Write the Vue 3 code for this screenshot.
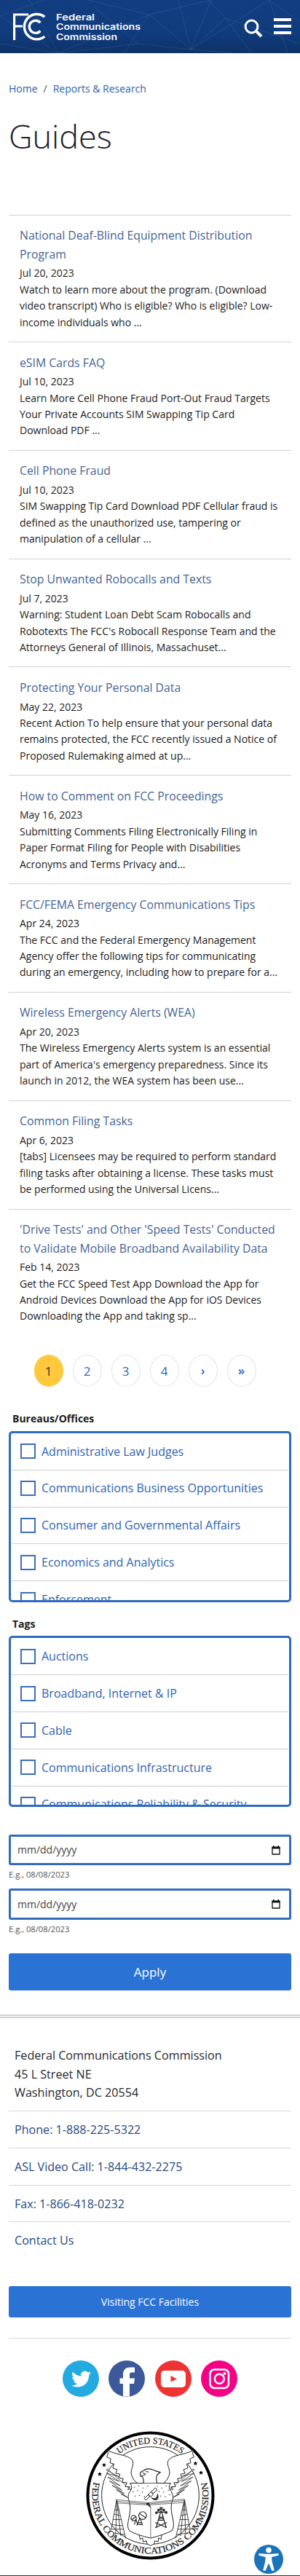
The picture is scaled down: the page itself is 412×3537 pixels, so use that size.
<script setup>
const guides = [
  ['National Deaf-Blind Equipment Distribution Program', 'Jul 20, 2023', 'Watch to learn more about the program. (Download video transcript) Who is eligible? Who is eligible? Low-income individuals who ...'],
  ['eSIM Cards FAQ', 'Jul 10, 2023', 'Learn More Cell Phone Fraud Port-Out Fraud Targets Your Private Accounts SIM Swapping Tip Card Download PDF ...'],
  ['Cell Phone Fraud', 'Jul 10, 2023', 'SIM Swapping Tip Card Download PDF Cellular fraud is defined as the unauthorized use, tampering or manipulation of a cellular ...'],
  ['Stop Unwanted Robocalls and Texts', 'Jul 7, 2023', "Warning: Student Loan Debt Scam Robocalls and Robotexts The FCC's Robocall Response Team and the Attorneys General of Illinois, Massachuset..."],
  ['Protecting Your Personal Data', 'May 22, 2023', 'Recent Action To help ensure that your personal data remains protected, the FCC recently issued a Notice of Proposed Rulemaking aimed at up...'],
  ['How to Comment on FCC Proceedings', 'May 16, 2023', 'Submitting Comments Filing Electronically Filing in Paper Format Filing for People with Disabilities Acronyms and Terms Privacy and...'],
  ['FCC/FEMA Emergency Communications Tips', 'Apr 24, 2023', 'The FCC and the Federal Emergency Management Agency offer the following tips for communicating during an emergency, including how to prepare for a...'],
  ['Wireless Emergency Alerts (WEA)', 'Apr 20, 2023', "The Wireless Emergency Alerts system is an essential part of America's emergency preparedness. Since its launch in 2012, the WEA system has been use..."],
  ['Common Filing Tasks', 'Apr 6, 2023', '[tabs] Licensees may be required to perform standard filing tasks after obtaining a license. These tasks must be performed using the Universal Licens...'],
  ["'Drive Tests' and Other 'Speed Tests' Conducted to Validate Mobile Broadband Availability Data", 'Feb 14, 2023', 'Get the FCC Speed Test App Download the App for Android Devices Download the App for iOS Devices Downloading the App and taking sp...'],
]
const pages = ['1', '2', '3', '4', '›', '»']
const filters = [
  { label: 'Bureaus/Offices', options: ['Administrative Law Judges', 'Communications Business Opportunities', 'Consumer and Governmental Affairs', 'Economics and Analytics', 'Enforcement'] },
  { label: 'Tags', options: ['Auctions', 'Broadband, Internet & IP', 'Cable', 'Communications Infrastructure', 'Communications Reliability & Security'] },
]
const contacts = ['Phone: 1-888-225-5322', 'ASL Video Call: 1-844-432-2275', 'Fax: 1-866-418-0232', 'Contact Us']
const stars = [[125, 197], [107, 234], [502, 190], [525, 228]]
const dots = [[250, 290], [268, 284], [287, 292], [305, 284], [245, 308], [264, 303], [283, 309], [253, 325], [272, 323], [291, 327], [345, 285], [363, 292], [382, 284], [352, 306], [371, 309], [390, 302], [358, 325], [378, 328], [395, 320]]
</script>

<template>
  <div class="page">
    <header class="top">
      <svg class="web" viewBox="0 0 412 73" preserveAspectRatio="none">
        <path d="M0 22L60 0M0 22L80 73L205 20L290 0L262 68L370 0L412 30M120 0L205 20L262 68L245 0M205 20L170 73M262 68L310 25L285 0M310 25L345 73M310 25L412 60M320 73L262 68L190 60L80 73L40 0M130 10L190 60M370 0L395 73M0 60L80 73" />
      </svg>
      <svg class="logo" viewBox="0 0 200 73">
        <g fill="none" stroke="#fff">
          <path d="M19.6 55V20H39M19.6 36H31" stroke-width="3.2" />
          <path d="M61.3 23.2A17.2 17.2 0 1 0 61.3 50.2" stroke-width="3.4" />
          <path d="M55.3 31.1A8.6 8.6 0 1 0 55.3 42.5" stroke-width="3.4" />
        </g>
        <g class="brand">
          <text x="77" y="27.5" textLength="53" lengthAdjust="spacingAndGlyphs">Federal</text>
          <text x="77" y="41" textLength="116" lengthAdjust="spacingAndGlyphs">Communications</text>
          <text x="77" y="54.5" textLength="84" lengthAdjust="spacingAndGlyphs">Commission</text>
        </g>
      </svg>
      <div class="tools">
        <svg width="26" height="26" viewBox="0 0 26 26"><circle cx="10.5" cy="10.5" r="8.4" fill="none" stroke="#fff" stroke-width="3" /><path d="M16.4 16.4L24 24" stroke="#fff" stroke-width="4" /></svg>
        <span class="burger"><i /><i /><i /></span>
      </div>
    </header>

    <main>
      <nav class="crumbs"><a>Home</a><span>/</span><a>Reports &amp; Research</a></nav>
      <h1>Guides</h1>
      <section class="guides">
        <article v-for="g in guides" :key="g[0]">
          <h2>{{ g[0] }}</h2>
          <p>{{ g[1] }}</p>
          <p>{{ g[2] }}</p>
        </article>
      </section>
      <nav class="pager">
        <a v-for="(p, i) in pages" :key="p" :class="{ current: i === 0, small: i > 3 }">{{ p }}</a>
      </nav>
      <section v-for="f in filters" :key="f.label" class="filter">
        <h3>{{ f.label }}</h3>
        <div class="options">
          <label v-for="o in f.options" :key="o"><span class="box" />{{ o }}</label>
        </div>
      </section>
      <section class="dates">
        <div v-for="n in 2" :key="n" class="date">
          <div class="field">
            <span>mm/dd/yyyy</span>
            <svg width="12" height="13" viewBox="0 0 12 13"><path d="M1 3H11V12H1Z" fill="none" stroke="#111" stroke-width="1.3" /><path d="M.4 1.6H11.6V4.4H.4ZM2 0H3.6V2H2ZM8.4 0H10V2H8.4Z" fill="#111" /></svg>
          </div>
          <small>E.g., 08/08/2023</small>
        </div>
      </section>
      <button class="apply">Apply</button>
    </main>

    <footer>
      <address>Federal Communications Commission<br />45 L Street NE<br />Washington, DC 20554</address>
      <a v-for="c in contacts" :key="c" class="contact">{{ c }}</a>
      <button class="visit">Visiting FCC Facilities</button>
      <div class="social">
        <svg viewBox="0 0 50 50"><circle cx="25" cy="25" r="25" fill="#24aae1" /><path fill="#fff" d="M39 17.2c-1 .5-2 .8-3.1.9 1.100-.7 2-1.700 2.400-2.900-1 .6-2.200 1.100-3.500 1.300a5.500 5.500 0 0 0-9.500 5c-4.600-.2-8.600-2.400-11.300-5.700-1.500 2.500-.8 5.700 1.700 7.300-.9 0-1.700-.3-2.500-.7 0 2.600 1.900 5 4.400 5.500-.8.2-1.600.3-2.500.1.700 2.200 2.700 3.700 5.200 3.800A11 11 0 0 1 12 34.300c8.500 5.300 24.300 1.500 24.200-14.200 1.100-.8 2.100-1.800 2.800-2.900z" /></svg>
        <svg viewBox="0 0 50 50"><circle cx="25" cy="25" r="25" fill="#3c5a9a" /><path fill="#fff" d="M20 49.500V32h-4.500v-7.500H20v-5c0-7 4-10 9.500-10H36v7h-4c-2.500 0-3 1.300-3 3.300v4.700h7L35 32h-6v17.500Z" /></svg>
        <svg viewBox="0 0 50 50"><circle cx="25" cy="25" r="25" fill="#ee3432" /><rect x="8" y="14" width="34" height="23" rx="5" fill="#fff" /><path d="M21.500 21L30 25.500L21.500 29.500Z" fill="#ee3432" /></svg>
        <svg viewBox="0 0 50 50"><circle cx="25" cy="25" r="25" fill="#f40185" /><g fill="none" stroke="#fff" stroke-width="2.500"><rect x="12.500" y="12.500" width="25.500" height="25.500" rx="6" /><circle cx="25.300" cy="25.300" r="6.500" /></g><circle cx="32.500" cy="18" r="1.900" fill="#fff" /></svg>
      </div>
      <svg class="seal" viewBox="50 57 532 532">
        <defs>
          <path id="sealTop" d="M102 323A214 214 0 0 1 530 323" />
          <path id="sealBottom" d="M90.500 240.900A240 240 0 1 0 541.500 240.900" />
        </defs>
        <circle cx="316" cy="323" r="258.500" fill="#fff" stroke="#000" stroke-width="12" />
        <circle cx="316" cy="323" r="201" fill="none" stroke="#222" stroke-width="3" />
        <!-- wings -->
        <g fill="#fff" stroke="#222" stroke-width="3" stroke-linejoin="round">
          <path d="M134 217l52 28-50-14 52 34-48-18 52 36-45-20 52 38-41-20 50 34-33-16 44 30-23-12 37 20 8-34-80-68-20-22z" stroke-width="2.200" />
          <path d="M138 135C165 155 240 155 244 184C248 205 228 220 241 246Q247 262 261 271Q250 298 222 298l10-10-20-2 7-16-20-2 5-15-19-3 6-15-18-4 6-15-18-6 5-17-17-5 4-16-17-8 6-16z" />
        </g>
        <g transform="matrix(-1 0 0 1 632 0)" fill="#fff" stroke="#222" stroke-width="3" stroke-linejoin="round">
          <path d="M134 217l52 28-50-14 52 34-48-18 52 36-45-20 52 38-41-20 50 34-33-16 44 30-23-12 37 20 8-34-80-68-20-22z" stroke-width="2.200" />
          <path d="M138 135C165 155 240 155 244 184C248 205 228 220 241 246Q247 262 261 271Q250 298 222 298l10-10-20-2 7-16-20-2 5-15-19-3 6-15-18-4 6-15-18-6 5-17-17-5 4-16-17-8 6-16z" />
        </g>
        <!-- radio towers -->
        <g fill="none" stroke="#222" stroke-width="2.500">
          <path d="M177 340L154 464M177 340L214 500M177 340L173 478M177 340L194 490M170 382H187M166 400L191 406M162 422H196M158 443L201 448M155 462H206M163 478L211 484" />
          <path transform="matrix(-1 0 0 1 634 0)" d="M177 340L154 464M177 340L214 500M177 340L173 478M177 340L194 490M170 382H187M166 400L191 406M162 422H196M158 443L201 448M155 462H206M163 478L211 484" />
        </g>
        <g fill="#fff" stroke="#222" stroke-width="3">
          <path d="M268 478l6 26 10-6 2 16 14-4 2 12 15 8 15-8 2-12 14 4 2-16 10 6 4-26-47 18z" />
          <path d="M232 272H400Q386 288 402 306Q416 330 404 352C394 400 425 440 405 468Q375 484 317 499Q255 484 229 468C210 440 242 400 230 352Q218 325 231 308Q246 290 232 272Z" />
        </g>
        <path d="M175 340L306 353L456 338M177 347L306 358L456 344M179 354L306 362L456 352M317 368V497" fill="none" stroke="#555" stroke-width="2.500" />
        <path d="M296 356l14-5 9 24z" fill="#333" />
        <!-- eagle head -->
        <path d="M287 271Q290 255 281 241Q274 250 274 234Q275 223 286 222Q300 209 322 215Q340 224 357 227L344 238Q338 250 343 271" fill="#fff" stroke="#222" stroke-width="3.500" />
        <path d="M283 229l15 6M297 224l12 2M285 240l11-3" fill="none" stroke="#222" stroke-width="3" />
        <g fill="#333"><circle v-for="(d, i) in dots" :key="i" :cx="d[0]" :cy="d[1]" r="2.200" /></g>
        <!-- satellite -->
        <g fill="#fff" stroke="#222" stroke-width="3">
          <path d="M291 335l16-15 6 8-16 14zM320 307l17-16 7 9-17 15zM308 318l11-10 9 11-11 10z" />
          <path d="M321 333q22 10 25-16q6 22-6 24q-12 2-19-8z" fill="#444" />
        </g>
        <!-- dishes and mast -->
        <g fill="none" stroke="#222" stroke-width="3.500">
          <circle cx="247" cy="416" r="11" /><circle cx="284" cy="406" r="16" />
          <path d="M239 423l17-13M270 397l27 18M256 421l-6 22M256 421l8 22M273 415l-13 31M273 415l11 31M264 435h17M262 442h22" />
          <path d="M360 384L340 456M360 384L382 456M336 456l48-22M384 456l-48-22M347 425h27M351 409l20 12M370 409l-20 12M342 392h37M350 380h23M354 373h13" />
        </g>
        <g fill="#333"><circle cx="341" cy="394" r="6" /><circle cx="381" cy="393" r="6" /><circle cx="350" cy="383" r="6" /><circle cx="371" cy="383" r="6" /><circle cx="360" cy="376" r="4" /></g>
        <path v-for="(s, i) in stars" :key="'s' + i" :transform="`translate(${s[0]} ${s[1]})`" d="M0-9l2.600 6H9L4 1.500 6 9 0 4.600-6 9-4 1.500-9-3h6.400z" />
        <g class="ring">
          <text textLength="276" lengthAdjust="spacingAndGlyphs"><textPath href="#sealTop" startOffset="198">UNITED STATES</textPath></text>
          <text textLength="866" lengthAdjust="spacingAndGlyphs"><textPath href="#sealBottom" startOffset="27">FEDERAL COMMUNICATIONS COMMISSION</textPath></text>
        </g>
      </svg>
      <svg class="access" viewBox="0 0 40 40"><circle cx="20" cy="20" r="20" fill="#1b73ba" /><circle cx="20" cy="7.500" r="3.800" fill="#fff" /><path fill="#fff" d="M6.500 12l9.500.8h8l9.500-.8v2.800L24 17l.8 7 3 11.200-3.300.8L20 25.500 15.500 36l-3.300-.8L15 24l.8-7-9.300-2.200z" /></svg>
    </footer>
    <div class="bottom" />
  </div>
</template>

<style>
body { background: #fff; }
</style>

<style scoped>
* { box-sizing: border-box; }
.page { width: 412px; height: 3537px; overflow: hidden; position: relative; display: flex; flex-direction: column; font-family: "Open Sans", sans-serif; font-size: 14px; line-height: 22.4px; color: #1b1b1b; background: #fff; }
h1, h2, h3, p { margin: 0; }
button { font-family: inherit; border: 0; color: #fff; background: #2a72d4; border-radius: 3px; display: block; width: 388px; padding: 0; }
.top { height: 73px; flex: none; display: flex; justify-content: space-between; position: relative; background: linear-gradient(#123d80, #103c7d 60%, #0d3268); }
.web { position: absolute; inset: 0; width: 412px; height: 73px; fill: none; stroke: #4b72ad; stroke-opacity: .3; stroke-width: 1; }
.logo { width: 200px; height: 73px; position: relative; }
.brand { fill: #fff; font-family: Inter, sans-serif; font-weight: 600; font-size: 11.5px; }
.tools { display: flex; gap: 15px; padding: 25px 12px 0 0; position: relative; }
.tools svg { margin-top: 1px; }
.burger { width: 24px; display: flex; flex-direction: column; gap: 5px; }
.burger i { height: 4px; background: #fff; }
main { padding: 0 12px; height: 2693px; flex: none; }
.crumbs { padding-top: 38px; display: flex; color: #555; height: 82px; }
.crumbs a { color: #2c62b0; }
.crumbs span { margin: 0 8px; }
h1 { font-weight: 300; font-size: 45px; line-height: 63px; height: 139.600px; color: #1b1b27; }
article { border-top: 1px solid #d2d2d2; padding: 15.500px 15px 15.100px; }
h2 { font-size: 15.800px; font-weight: 400; line-height: 25.600px; color: #456596; padding-bottom: 2px; }
.guides { height: 1539.900px; }
.pager { display: flex; gap: 13px; padding: 25.500px 0 0 34.500px; height: 94px; }
.pager a { width: 40px; height: 44px; border: 1px solid #e4e4e4; border-radius: 50%; text-align: center; line-height: 43px; font-size: 17px; color: #2c67bd; }
.pager a.small { font-weight: 600; line-height: 42px; }
.pager a.current { background: #ffc83d; border-color: #ffc83d; color: #333; }
.filter { height: 281.500px; }
h3 { font-size: 14px; font-weight: 700; line-height: 22.400px; padding-left: 5px; height: 36.500px; padding-top: 8.900px; }
.options { height: 235px; border: 3px solid #2f6bbf; border-radius: 5px; overflow: hidden; padding: 0 1px; }
label { display: flex; align-items: center; height: 50.800px; border-bottom: 1px solid #cfcfcf; padding: 0 0 0 12px; font-size: 16px; color: #2f64b0; }
.box { width: 21px; height: 21px; border: 2px solid #3a6fbd; margin-right: 8px; flex: none; }
.dates { padding-top: 27.500px; height: 191px; }
.date { height: 74.500px; }
.field { height: 42.500px; border: 3px solid #346cbd; border-radius: 3px; display: flex; align-items: center; justify-content: space-between; padding: 0 12px 0 9px; color: #444; }
small { display: block; font-size: 11.200px; line-height: 17.900px; margin-top: 4px; color: #555; }
.apply { height: 51px; font-size: 17px; }
footer { border-top: 5px double #d2d2d2; height: 770px; flex: none; padding: 39px 12px 0; position: relative; }
address { font-style: normal; font-size: 16.150px; line-height: 25.600px; padding-left: 8px; height: 88px; color: #262a33; }
.contact { display: block; height: 50.800px; border-top: 1px solid #d8d8d8; font-size: 16.100px; line-height: 50px; padding-left: 8px; color: #274a80; }
.visit { height: 43px; font-size: 14px; margin-top: 37.500px; }
.social { margin-top: 28px; border-top: 1px solid #d8d8d8; height: 110px; padding: 30.500px 74px 0; display: flex; gap: 13.300px; }
.social svg { width: 50px; height: 50px; flex: none; }
.seal { display: block; width: 177px; height: 177px; margin: 18.500px auto 0; }
.ring { font-family: "Liberation Serif", serif; font-size: 38px; fill: #222; stroke: #222; stroke-width: .6; }
.access { position: absolute; width: 40px; height: 40px; left: 349px; top: 723px; }
.bottom { height: 1px; background: #103c7d; }
</style>
